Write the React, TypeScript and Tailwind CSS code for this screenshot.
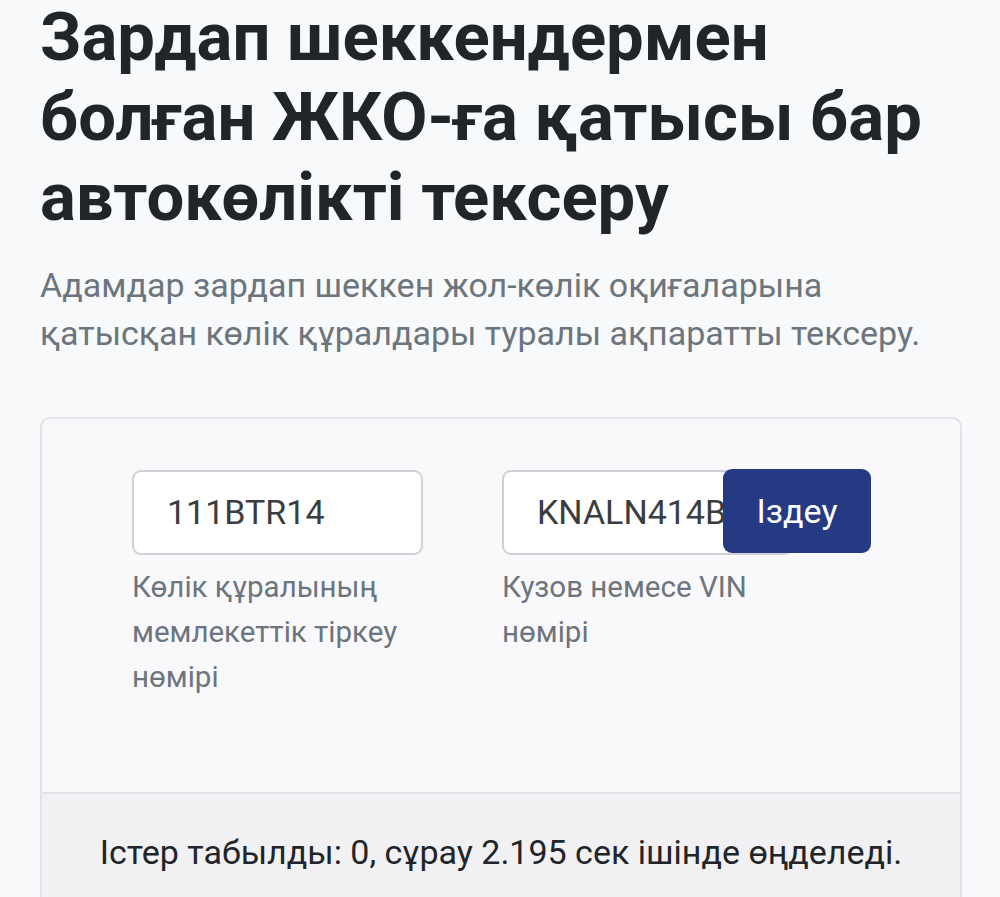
import React from "react";

export default function App() {
  return (
    <div className="min-h-[897px] bg-[#f8f9fa] px-[40px] text-[#212529]" style={{ fontFamily: "Roboto, 'Noto Sans', sans-serif" }}>
      <h1 className="mt-[-3px] text-[67px] font-bold leading-[80px]">
        Зардап шеккендермен болған ЖКО-ға қатысы бар автокөлікті тексеру
      </h1>
      <p className="mt-[24px] w-[925px] text-[34px] leading-[48px] text-[#6c757d]">
        Адамдар зардап шеккен жол-көлік оқиғаларына қатысқан көлік құралдары туралы ақпаратты тексеру.
      </p>
      <div className="mt-[60px] w-[922px] overflow-hidden rounded-[10px] border-2 border-[#e1e3e6] bg-[#f9f9fb]">
        <div className="flex h-[373px] gap-[79px] pl-[90px] pt-[51px]">
          <div className="w-[291px]">
            <div className="flex h-[85px] items-center rounded-[9px] border-2 border-[#cfd1d4] bg-white pl-[33px] text-[34px] text-[#3a3d40]">
              111BTR14
            </div>
            <div className="mt-[10px] text-[29.5px] leading-[45px] text-[#6c757d]">
              Көлік құралының мемлекеттік тіркеу нөмірі
            </div>
          </div>
          <div className="w-[291px]">
            <div className="relative h-[85px]">
              <div className="flex h-[85px] items-center overflow-hidden whitespace-nowrap rounded-[9px] border-2 border-[#cfd1d4] bg-white pl-[33px] text-[34px] text-[#3a3d40]">
                KNALN414B
              </div>
              <button className="absolute left-[221px] top-[-1px] flex h-[84px] w-[148px] items-center justify-center rounded-[9px] bg-[#263a84] text-[34px] text-white">
                Іздеу
              </button>
            </div>
            <div className="mt-[10px] text-[29.5px] leading-[45px] text-[#6c757d]">
              Кузов немесе VIN нөмірі
            </div>
          </div>
        </div>
        <div className="h-[120px] border-t-2 border-[#e1e3e6] bg-[#f1f1f3] pt-[38px] text-center text-[34px] leading-[40px] text-[#212529]">
          Істер табылды: 0, сұрау 2.195 сек ішінде өңделеді.
        </div>
      </div>
    </div>
  );
}
